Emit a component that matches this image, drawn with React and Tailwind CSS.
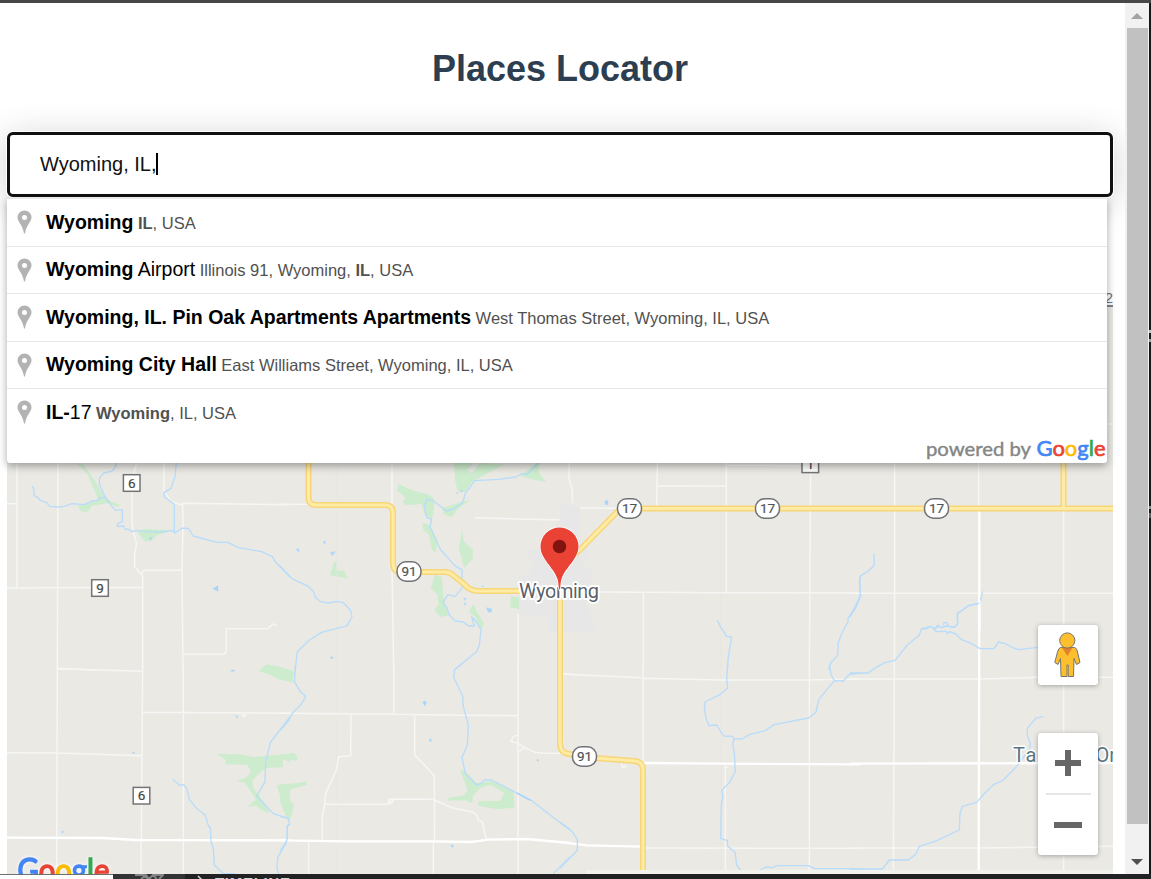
import React from "react";

const SUGGESTIONS = [
  { main: [["Wyoming", true]], detail: [["IL", true], [", USA", false]] },
  { main: [["Wyoming", true], [" Airport", false]], detail: [["Illinois 91, Wyoming, ", false], ["IL", true], [", USA", false]] },
  { main: [["Wyoming, IL. Pin Oak Apartments Apartments", true]], detail: [["West Thomas Street, Wyoming, IL, USA", false]] },
  { main: [["Wyoming City Hall", true]], detail: [["East Williams Street, Wyoming, IL, USA", false]] },
  { main: [["IL-", true], ["17", false]], detail: [["Wyoming", true], [", IL, USA", false]] },
];

// Map sectors: every sector holds paths in a grid three times finer than the map.
const SECTORS = [
  {
    x: 0, y: 460,
    green: [
      "M228 9L250 14L280 55L312 108L335 125L363 136L350 140L322 130L275 137L264 155L245 155L232 138L270 126L294 116L262 40Z",
      "M410 211L440 207L515 211L470 226L455 242L433 244Z",
      "M780 630L802 613L862 630Z",
    ],
    roads: ["M51 9V383", "M21 131H51", "M174 9L172 630", "M21 384L427 382", "M410 9L396 60V190L402 222L410 250L404 280L404 320L424 343L428 350V630", "M424 343L430 331H546", "M492 9V95L515 125L546 135", "M546 130L870 134", "M548 130L549 190L546 330L549 630", "M549 583H670Q680 580 679 560V506H803L819 492L830 496", "M172 625L290 630"],
    water: ["M97 78L102 88V107L110 110L123 122L140 128L149 139L172 141L193 139L215 131L253 134L278 122L295 121L298 114L315 113", "M350 9Q345 28 334 34L312 39L298 54V72L315 110L327 128L346 151L367 149V185L353 191L352 199L371 198L374 207L386 208L397 215L410 211L440 215L490 216L515 211L524 219L548 204L566 206L580 228L650 247H684L715 263L785 275L817 290L824 303L870 351", "M529 9L525 50L513 85L492 98L494 111L523 133V218"],
    ponds: ["M638 386L654 377V394Z", "M447 234L456 231L452 241Z"],
  },
  {
    x: 280, y: 460,
    green: ["M522 9L525 60L533 95L555 97L580 62L672 14L600 9L575 40L562 30L580 9Z", "M357 72L350 92L377 112L368 125L378 136L425 132L435 164L455 176L462 150V118L450 105L395 90Z", "M720 48L745 28L768 9H780L775 35L798 65L765 60Z", "M486 145L540 127L570 121L535 145L515 172L490 162Z", "M428 188L450 195L472 240L468 278L456 270L447 225L430 209Z", "M547 209L552 245L579 270V295L552 324L537 265Z", "M162 306L171 309V330L192 333L204 356L150 345Z", "M465 345L485 350L490 410L505 467L480 470L462 450L475 434L473 405L452 384Z", "M582 431L590 455L612 490L605 510L585 470L566 455Z", "M692 410L718 411V448L690 442Z", "M0 622L18 630H0Z"],
    town: ["M840 132H870V515H805L800 470H716V350L750 340L760 310L732 270H785L812 220L840 175Z"],
    roads: ["M0 133H90", "M336 9V310L341 630", "M585 173L740 178L838 179", "M714 462V630"],
    faint: ["M169 9V630"],
    water: ["M0 318L36 356L85 379L101 395L106 412L122 425L145 429L170 424L190 428L211 450L216 470L202 497L125 517L88 540L52 575L45 630", "M775 9L742 42H724L708 51L655 58L584 62L570 82L557 98L548 128L520 147L500 153L455 119L440 120L433 138L440 173L455 177L450 201L482 270L528 320L546 329V385L524 410L504 403L489 428L500 442L508 465L525 483L550 486L566 498H583L575 471L588 484L603 508L598 555L590 575L522 630"],
    ponds: ["M49 270L55 264L58 276Z", "M130 245L138 244L134 253Z", "M152 277L166 275L156 288Z", "M619 443L634 446L636 455L625 457Z", "M551 414L560 416L554 421Z", "M552 428L559 432L554 436Z", "M150 591L160 591L156 598Z", "M528 98H533V102Z", "M541 92L548 91L545 97Z", "M607 376L611 380H606Z"],
  },
  {
    x: 560, y: 460,
    green: [],
    town: ["M0 132H18L58 145L58 235L85 260L85 290L68 300L70 322L94 325V378L78 400V430L108 515H0Z"],
    roads: ["M28 9L27 55L37 90V130", "M60 144L175 145", "M292 9L290 140", "M292 77L498 79", "M499 9V398", "M499 15L720 17", "M752 9L748 630", "M110 396L500 398L900 399", "M250 398V630"],
    faint: ["M482 9V630"],
    water: ["M472 481L483 503L500 529L515 531L505 590L502 630", "M900 348V408L883 447L864 475V486L848 514L835 547L833 586L812 609L806 630"],
    ponds: ["M135 122H144V134H135Z"],
  },
  {
    x: 850, y: 420,
    green: [],
    roads: ["M771 12H789", "M134 130V630", "M386 130V270", "M641 270V630", "M0 520H789"],
    bold: ["M388 270V630"],
    water: ["M72 402L73 436L55 453L30 469L28 490L32 527L18 562L0 590", "M397 514L390 550L357 556L322 580L323 612L313 622L290 618L273 623L263 616L257 626L239 619L231 626L214 627", "M280 615Q280 607 289 607Q297 609 291 618"],
    ponds: [],
  },
  {
    x: 0, y: 665,
    green: ["M798 0L830 2L870 16V50L835 43L806 27L775 19Z", "M650 266L720 268L760 276L870 266V292L848 280V306L803 308L777 325L758 345V366L780 395L810 445L785 435L768 422L742 426L768 403L735 354L710 347L738 338L754 320L742 299L677 298V284Z", "M830 360L870 356V455L850 420Z"],
    roads: ["M172 0L170 626", "M172 11L426 19", "M428 0L423 626", "M550 0V626", "M428 142L870 145", "M21 263L170 264L426 272", "M728 147L730 154L736 153L737 147"],
    bold: ["M21 518L310 519L405 525L870 526"],
    water: ["M518 343L538 360H552L560 370L568 403L588 428L616 451L625 482L631 490L633 528L640 552L643 601L670 626H706", "M870 156L812 231L797 290L795 350L770 393L820 446L870 462", "M870 478L862 482V528L833 578L831 610L836 626"],
    ponds: ["M692 16L705 15L698 22Z", "M707 151L714 154L711 160Z", "M396 262H405L400 266Z", "M184 500L191 498L188 505Z"],
  },
  {
    x: 280, y: 665,
    green: ["M0 8L42 18L38 52L0 44Z", "M0 270L42 263L54 278L48 288L22 282L8 284V306H0Z", "M0 359L80 350V360L25 374L22 397L43 420L32 460L25 470L0 410Z", "M540 316H552L590 355L640 348L700 380L704 428L652 433L595 422V408L660 408L673 383L632 360L600 370L580 390L576 415L555 406L505 407L504 399L553 391L563 375L552 346Z"],
    roads: ["M342 0V148", "M0 145L340 148L540 151L714 152", "M714 0V626", "M213 149L212 272L176 275L168 318L137 385L134 417L127 455V526", "M404 150V269L463 332V405L464 526", "M134 417L325 418L328 402L463 403M328 417L332 403M334 417L340 404", "M463 405L515 428L580 442L591 452L594 463L608 473L614 505L620 523", "M86 530V626", "M460 532V626", "M714 211L701 214L692 229L714 235L735 248L765 262L790 265H870", "M716 260L735 248", "M850 27H870"],
    faint: ["M169 0V626"],
    bold: ["M0 526L200 529L460 529L574 531L625 524L740 522L870 534"],
    water: ["M47 0L43 50L61 80L77 94L64 118L37 145L25 168L0 197", "M542 0L524 14L521 37L548 93L550 125L565 180L562 240L546 277L556 326L590 360L600 357L615 344L635 345L700 379L755 407L830 465L870 493", "M0 454L25 460L29 478L22 482L21 525L0 560", "M870 576L820 626"],
    ponds: ["M428 111L435 107L440 114L434 123Z", "M448 222H454V229L449 230Z", "M771 283H775V288H771Z", "M511 541L520 540L519 548Z", "M713 383L755 406L747 406L710 386Z"],
  },
  {
    x: 560, y: 665,
    green: [],
    roads: ["M0 27L245 38", "M249 0V290", "M249 40L480 45H740L900 42", "M748 0V616", "M496 305V616", "M256 549L900 550", "M185 296Q185 307 191 307Q200 305 197 298", "M494 303L503 309"],
    bold: ["M248 294L480 296L900 298", "M0 531L80 541L245 545"],
    faint: ["M482 0V616"],
    water: ["M503 0L500 45L503 69L480 89L435 111L433 125L438 160L447 182L470 180L491 213L519 214L522 225L518 235L523 265L526 320L508 353L485 376L489 395L484 420L482 520L502 527L503 544L525 561L530 600L545 621", "M522 221L546 222L570 208L615 197L642 179L746 159L768 142L776 104L823 47L850 48L868 28L900 25", "M808 0L814 31L822 45", "M0 473L35 498L52 523V556L0 609", "M600 616L616 606L640 608L650 602H746L765 611H900"],
    ponds: [],
  },
  {
    x: 850, y: 600,
    green: [],
    roads: ["M134 0L130 810", "M641 0V810", "M0 237H385L564 232H789", "M0 744H385L789 739"],
    bold: ["M388 0L386 810", "M0 491L789 489"],
    water: ["M26 0L0 50", "M388 10L357 16L322 42L323 72L313 82L290 78L273 83L263 76L257 86L239 80L214 87L208 106L172 135L135 181L104 188L78 202L54 219H0", "M250 86Q257 98 272 94L289 94L292 101L298 95L318 102L335 119L365 131L390 146H432L446 126L466 131L490 144L505 149L565 142", "M580 349L557 355L532 385V407L541 430L540 445L522 470L502 497L459 541L430 554L402 582L380 607L337 619L330 640L328 690L255 724L208 739L197 763L175 780H118L97 807H0"],
    ponds: [],
  },
];

const STATE_ROADS = [
  "M308.500 463V497Q308.500 505 316 505H385Q393 505 393 513V563Q393 572 401 572H444Q450 572 454 576L464 584Q470 591 478 591H520",
  "M560 570L616 513Q620 508.500 627 508.500L936 508.500L1113 508.500",
  "M1063.500 463V508",
  "M560 597V743Q560 753 569 754L595 758L635 761Q643 762 643 770V874",
];

const OVAL_SHIELDS = [["91", 409, 571.5], ["17", 629.5, 508.5], ["17", 767.5, 508.5], ["17", 936.5, 508.5], ["91", 584.5, 756.5]];
const BOX_SHIELDS = [["6", 131.7, 483], ["9", 100, 588], ["6", 141.5, 795.7], ["1", 810.3, 464.3]];

const BRAND = [["G", "#4285f4"], ["o", "#ea4335"], ["o", "#fbbc05"], ["g", "#4285f4"], ["l", "#34a853"], ["e", "#ea4335"]];

function GoogleText({ x, y, size, width, weight, className }) {
  return (
    <text x={x} y={y} className={className} fontFamily="Lato, 'Open Sans', sans-serif" fontWeight="400" fontSize={size} textLength={width} lengthAdjust="spacingAndGlyphs" strokeWidth={weight}>
      {BRAND.map(([c, color], i) => <tspan key={i} fill={color} stroke={color}>{c}</tspan>)}
    </text>
  );
}

function MapCanvas() {
  return (
    <svg className="block h-full w-full" viewBox="7 307 1106 567" fontFamily="Roboto, sans-serif">
      <rect x="7" y="307" width="1106" height="567" fill="#eae9e4" />
      {SECTORS.map((s, i) => (
        <g key={i} transform={`translate(${s.x} ${s.y}) scale(.33333)`} fill="none">
          {s.town && <path d={s.town.join("")} fill="#e7e7e7" />}
          <path d={s.green.join("")} fill="#cdeccd" />
          {s.faint && <path d={s.faint.join("")} stroke="#e6e5e0" strokeWidth="2" />}
          <path d={s.roads.join("")} stroke="#f6f6f4" strokeWidth="4.500" strokeLinejoin="round" />
          {s.bold && <path d={s.bold.join("")} stroke="#fff" strokeWidth="7" />}
          <path d={s.water.join("")} stroke="#b8dcfa" strokeWidth="4" strokeLinejoin="round" />
          <path d={s.ponds.join("")} fill="#a9d6fc" stroke="#a9d6fc" strokeWidth="1" />
        </g>
      ))}
      <g fill="none">
        <path d={STATE_ROADS.join("")} stroke="#f7d679" strokeWidth="6" />
        <path d={STATE_ROADS.join("")} stroke="#ffeba3" strokeWidth="3" />
      </g>
      {OVAL_SHIELDS.map(([t, x, y], i) => (
        <g key={i}>
          <rect x={x - 12} y={y - 9.7} width="24" height="19.400" rx="9" fill="#fff" stroke="#6f7276" strokeWidth="1.500" />
          <text x={x} y={y + 4.8} textAnchor="middle" fontSize="13.500" fill="#505356" stroke="#505356" strokeWidth=".2">{t}</text>
        </g>
      ))}
      {BOX_SHIELDS.map(([t, x, y], i) => (
        <g key={i}>
          <rect x={x - 8.3} y={y - 8.3} width="16.600" height="16.600" fill="#fff" stroke="#747474" strokeWidth="1.500" />
          <text x={x} y={y + 4.7} textAnchor="middle" fontSize="13.500" fill="#454843" stroke="#454843" strokeWidth=".2">{t}</text>
        </g>
      ))}
      <text x="519" y="598" fontSize="20" textLength="80" fill="#5a6067" stroke="#fff" strokeWidth="4" strokeLinejoin="round" paintOrder="stroke">Wyoming</text>
      <g fontSize="20" fill="#5c7683" stroke="#fff" strokeWidth="3" strokeLinejoin="round" paintOrder="stroke">
        <text x="1013" y="762" textLength="23.500">Ta</text>
        <text x="1095.500" y="762">Or</text>
      </g>
      <path d="M559.500 590C558.300 588 558.800 583 557.500 579C554 567.500 540.500 559 540.500 546.500A19 19 0 0 1 578.500 546.500C578.500 559 565 567.500 561.500 579C560.200 583 560.700 588 559.500 590Z" fill="#ea4335" stroke="#fff" strokeWidth="1.600" paintOrder="stroke" />
      <circle cx="559.500" cy="546.500" r="6.800" fill="#811411" />
      <rect x="587" y="870" width="526" height="4" fill="#f1f1ee" />
      <GoogleText x="17.500" y="881.500" size="33" width="92" weight="1.500" className="drop-shadow-[0_0_2px_#ffffff]" />
    </svg>
  );
}

function MapControls() {
  return (
    <div className="absolute right-[15px] bottom-[19px] flex flex-col gap-12">
      <button className="flex h-[60px] w-[60px] items-center justify-center rounded-[3px] bg-white shadow-[0_1px_5px_rgba(0,0,0,0.3)]" aria-label="Street View">
        <svg width="28" height="46" viewBox="0 0 28 46">
          <g fill="#fdbf2d" stroke="#75746d" strokeWidth="1">
            <path d="M6.500 15.500H20.500Q23 16 23.500 20L26 30.500L22.500 32.500L20 26.500L19.500 44.500H14.200V33H13V44.500H7L6.500 26.500L4 32.500L.8 30.500L3.500 20Q4.500 16 6.500 15.500Z" />
            <path d="M8 15.500H18.500L13.400 24Z" fill="#e0812b" stroke="none" />
            <circle cx="13.300" cy="8.500" r="7.600" />
          </g>
        </svg>
      </button>
      <div className="flex h-[122px] w-[60px] flex-col items-center rounded-[3px] bg-white shadow-[0_1px_5px_rgba(0,0,0,0.3)]">
        <button className="flex h-[60px] w-full items-center justify-center" aria-label="Zoom in">
          <svg width="28" height="28" viewBox="0 0 28 28"><path d="M1 11H11V1H17V11H27V17H17V27H11V17H1Z" fill="#666" /></svg>
        </button>
        <div className="h-0.5 w-[45px] bg-[#e6e6e6]" />
        <button className="flex h-[60px] w-full items-center justify-center" aria-label="Zoom out">
          <svg width="28" height="6" viewBox="0 0 28 6"><path d="M0 0H28V6H0Z" fill="#666" /></svg>
        </button>
      </div>
    </div>
  );
}

function PinIcon() {
  return (
    <svg width="15" height="24" viewBox="0 0 15 24" className="mr-3.5 shrink-0">
      <path fillRule="evenodd" d="M7.500 .5A7 7 0 0 1 14.500 7.500C14.500 12 9.500 14 8 23.500H7C5.500 14 .5 12 .5 7.500A7 7 0 0 1 7.500 .5ZM7.500 5A2.500 2.500 0 1 0 7.500 10A2.500 2.500 0 1 0 7.500 5Z" fill="#b3b3b3" />
    </svg>
  );
}

function Parts({ parts }) {
  return parts.map(([t, strong], i) => <span key={i} className={strong ? "font-bold" : "font-normal"}>{t}</span>);
}

function Suggestions() {
  return (
    <div className="absolute top-full left-0 z-10 mt-px flex h-[265px] w-[1100px] flex-col rounded-b-[3px] bg-white shadow-[0_3px_9px_rgba(0,0,0,0.35)]">
      {SUGGESTIONS.map((s, i) => (
        <div key={i} className="flex h-[47.5px] shrink-0 items-center border-t border-[#e6e6e6] pl-[10px] whitespace-pre">
          <PinIcon />
          <div className="pt-px leading-[45px]">
            <span className="text-[19.5px] text-black"><Parts parts={s.main} /></span>
            <span className="ml-[4.5px] text-[16.5px] text-[#515151]"><Parts parts={s.detail} /></span>
          </div>
        </div>
      ))}
      <div className="flex min-h-0 flex-1 items-end justify-end">
        <svg className="shrink-0" width="188" height="36" viewBox="0 0 188 36">
          <text x="7" y="28.500" fontFamily="Lato, sans-serif" fontSize="19.500" fill="#858585" stroke="#858585" strokeWidth=".4" textLength="105" lengthAdjust="spacingAndGlyphs">powered by</text>
          <GoogleText x="117.500" y="28.500" size="21.500" width="69" weight=".7" />
        </svg>
      </div>
    </div>
  );
}

function Scrollbar() {
  return (
    <div className="flex w-6 shrink-0 flex-col items-center bg-[#f1f1f1]">
      <div className="flex h-[25px] shrink-0 items-center justify-center">
        <svg width="12" height="6" viewBox="0 0 12 6"><path d="M0 6L6 0L12 6Z" fill="#a3a3a3" /></svg>
      </div>
      <div className="h-[796px] w-[21px] shrink-0 bg-[#c1c1c1]" />
      <div className="flex flex-1 items-center justify-center pt-[26px]">
        <svg width="12" height="6" viewBox="0 0 12 6"><path d="M0 0L6 6L12 0Z" fill="#505050" /></svg>
      </div>
    </div>
  );
}

export default function App() {
  return (
    <div className="flex h-[879px] w-[1151px] flex-col overflow-hidden bg-[#202022] font-['Liberation_Sans',Arial,sans-serif]">
      <div className="h-[3px] shrink-0 bg-[#484646]" />
      <div className="flex h-[871px] shrink-0">
        <main className="flex w-[1125px] shrink-0 flex-col overflow-hidden bg-white pr-3 pl-[7px]">
          <h1 className="mt-[44px] h-[44px] text-center text-[36px] leading-[44px] font-bold text-[#2c3e50]">Places Locator</h1>
          <div className="relative mt-[41px] h-[65px] shrink-0">
            <div className="flex h-full items-center rounded-[6px] border-[3px] border-[#101010] bg-white pb-0.5 pl-[30px] text-[20px] text-[#111111] shadow-[0_0_0_1px_rgba(255,255,255,1),0_6px_36px_rgba(0,0,0,0.2)]">
              <span>Wyoming, IL,</span>
              <span className="-ml-px h-[22px] w-0.5 bg-black" />
            </div>
            <Suggestions />
          </div>
          <div className="mt-[93px] flex h-[17px] shrink-0 justify-end">
            <span className="h-[17px] border-b-2 border-[#808386] text-[15px] leading-[15px] text-[#717477]">2</span>
          </div>
          <div className="relative h-[567px] shrink-0">
            <MapCanvas />
            <MapControls />
          </div>
        </main>
        <Scrollbar />
        <div className="flex w-0.5 flex-col bg-[#16181c] pt-[327px]">
          <div className="h-[3px] bg-[#bfc3c8]" />
          <div className="mt-1.5 h-[3px] bg-[#a0a4a8]" />
          <div className="mt-[164px] h-[3px] bg-[#85888c]" />
          <div className="mt-1 h-[5px] bg-[#665a5a]" />
        </div>
      </div>
      <footer className="flex h-[5px] shrink-0 overflow-hidden">
        <div className="w-[113px] border-t border-[#6f6f6f] bg-white" />
        <div className="flex w-[72px] justify-center bg-[#333334]">
          <svg width="30" height="5" viewBox="0 0 30 5"><path d="M1 1H10L14 5M7 5L12 1L15 5L19 1L23 5M18 1H29L25 5" fill="none" stroke="#858585" strokeWidth="2" /></svg>
        </div>
        <div className="flex flex-1 bg-[#222224] pl-3 font-bold text-[#d6d6d6]">
          <svg width="8" height="5" viewBox="0 0 8 5"><path d="M1 2L5 6" fill="none" stroke="#d6d6d6" strokeWidth="1.500" /></svg>
          <span className="ml-2.5 text-[15px] leading-[17px] tracking-[0.7px]">TIMELINE</span>
        </div>
      </footer>
    </div>
  );
}
